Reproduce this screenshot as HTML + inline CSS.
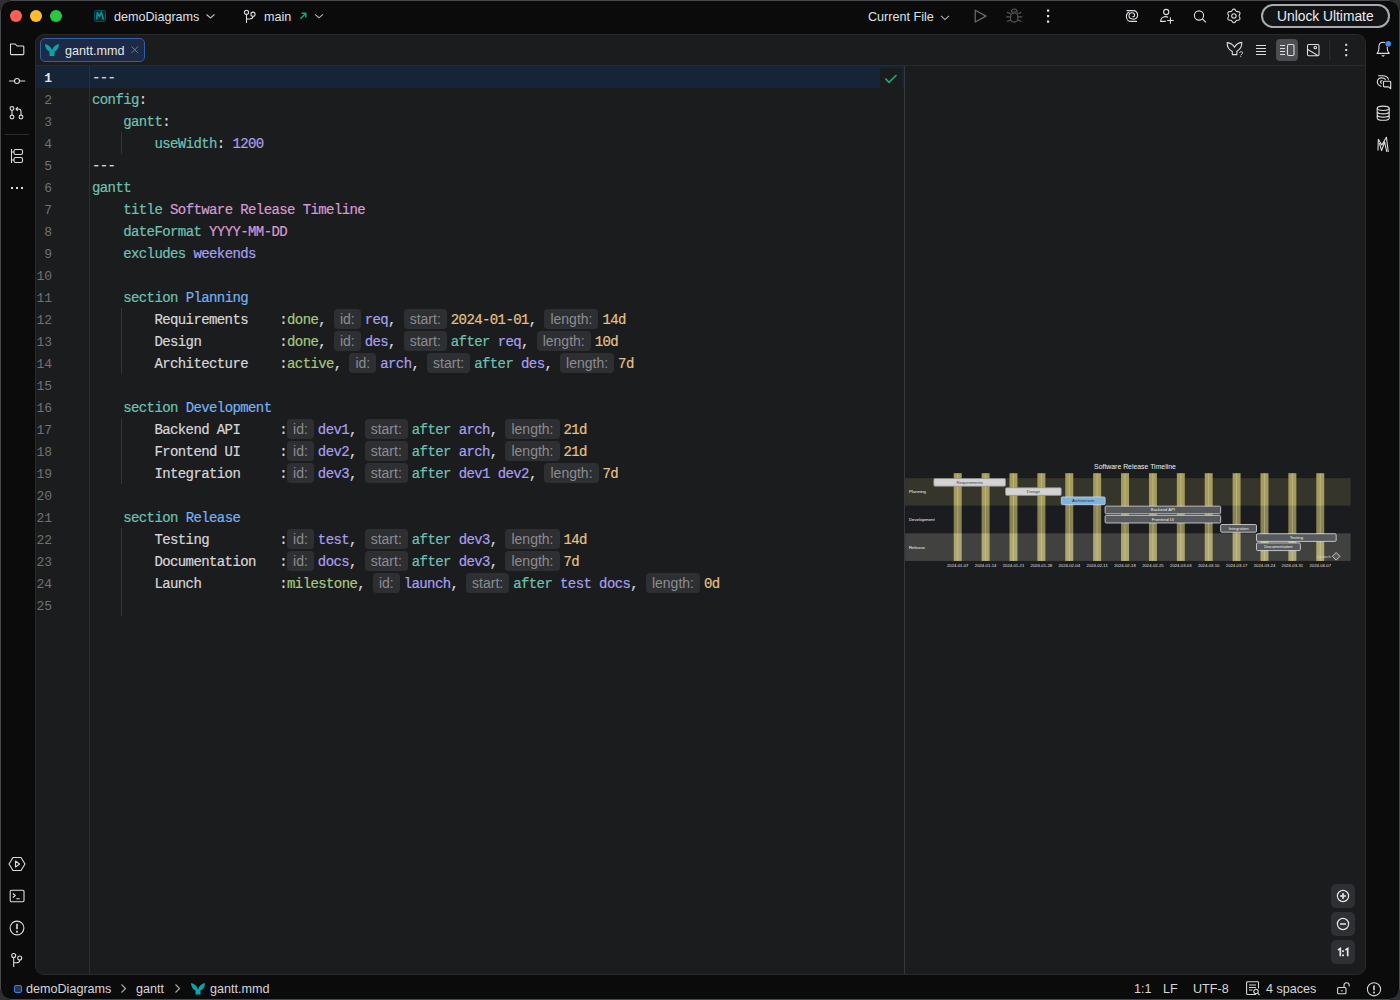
<!DOCTYPE html>
<html><head><meta charset="utf-8">
<style>
*{margin:0;padding:0;box-sizing:border-box}
html,body{width:1400px;height:1000px;overflow:hidden;background:#2e3034}
body{position:relative;font-family:"Liberation Sans",sans-serif;color:#dfe1e5}
.win{position:absolute;left:0;top:0;width:1400px;height:1000px;background:#0b0b0c;border-radius:11px;overflow:hidden}
.wb{position:absolute;left:0;top:0;width:1400px;height:1000px;border:1px solid #48494c;border-radius:11px;pointer-events:none}
.abs{position:absolute}
.tl{position:absolute;width:12px;height:12px;border-radius:50%;top:10px}
.ui{position:absolute;font-size:12.6px;line-height:16px;color:#dfe1e5;white-space:nowrap}
svg{position:absolute;overflow:visible}
.panel{position:absolute;left:35px;top:34px;width:1331px;height:941px;background:#1b1c1e;border:1px solid #28292b;border-radius:9px;overflow:hidden}
.code{position:absolute;left:92px;font-family:"Liberation Mono",monospace;font-size:14px;letter-spacing:-0.6px;-webkit-text-stroke:0.2px currentColor;line-height:22px;height:22px;padding-top:1px;white-space:pre;color:#d6d7da}
.ln{position:absolute;left:36px;width:16px;text-align:right;font-family:"Liberation Mono",monospace;font-size:13px;line-height:22px;height:22px;padding-top:2px;color:#6f7175;white-space:pre}
.ln.cur{color:#e3e4e7;font-weight:bold}
.k{color:#6fc1b3}.p{color:#a99ff0}.s{color:#d69ad6}.b{color:#76b1f2}.g{color:#a5c880}.y{color:#e6c187}.w{color:#d6d7da}
.h{display:inline-block;vertical-align:top;margin-top:0px;height:19.5px;line-height:21px;padding:0 6px;margin-right:4px;border-radius:4px;background:#2e2f32;color:#8b8c90;font-family:"Liberation Sans",sans-serif;font-size:14px;letter-spacing:0;-webkit-text-stroke:0}
.st{position:absolute;top:981px;font-size:12.6px;line-height:16px;color:#d5d6d9;white-space:nowrap}
</style></head><body>
<div class="win">
  <div class="tl" style="left:10px;background:#fe5f57"></div>
  <div class="tl" style="left:30px;background:#febc2e"></div>
  <div class="tl" style="left:50px;background:#28c840"></div>
  <div class="ui" style="left:114px;top:9px">demoDiagrams</div>
  <div class="ui" style="left:264px;top:9px">main</div>
  <div class="ui" style="left:868px;top:9px">Current File</div>
  <div class="abs" style="left:1261px;top:4px;width:129px;height:24px;border:2px solid #a9aaad;border-radius:12px;background:#131416"></div>
  <div class="ui" style="left:1277px;top:9px;font-size:13.8px;color:#eceef1">Unlock Ultimate</div>
  <!-- title bar icons -->
  <svg style="left:0;top:0" width="1400" height="34" viewBox="0 0 1400 34">
    <rect x="94.5" y="10.5" width="11" height="11" rx="1" fill="#052a2d" stroke="#0a4b50" stroke-width="1"/>
    <path d="M96.8 19.6 L97.3 12.6 L99.6 16.5 L101.3 12.2 L103.6 19.8" fill="none" stroke="#0b909a" stroke-width="1.6" stroke-linejoin="round"/>
    <path d="M206.5 14.5 L210.5 18 L214.5 14.5" fill="none" stroke="#b8b9bc" stroke-width="1.1"/>
    <circle cx="246.5" cy="12.3" r="2.1" fill="none" stroke="#dcdde0" stroke-width="1.1"/>
    <circle cx="253" cy="14.2" r="2.1" fill="none" stroke="#dcdde0" stroke-width="1.1"/>
    <path d="M246.5 14.4 V23 M253 16.3 C253 18.6 251.5 19 249.5 19 H246.5" fill="none" stroke="#dcdde0" stroke-width="1.1"/>
    <path d="M300.5 18.8 L305.6 13.5 M301.6 13.3 H305.8 V17.5" fill="none" stroke="#1fa36f" stroke-width="1.5"/>
    <path d="M315 14.3 L319 17.8 L323 14.3" fill="none" stroke="#b8b9bc" stroke-width="1.1"/>
    <path d="M941 15.8 L945 19.6 L949 15.8" fill="none" stroke="#b8b9bc" stroke-width="1.1"/>
    <path d="M975.2 10.2 L986 16.1 L975.2 22 Z" fill="none" stroke="#6c6d70" stroke-width="1.2" stroke-linejoin="round"/>
    <g fill="none" stroke="#545557" stroke-width="1.2" stroke-linecap="round">
      <path d="M1011.3 12 C1011.3 10.2 1012.5 9 1014.2 9 C1015.9 9 1017.1 10.2 1017.1 12 Z"/>
      <rect x="1010.6" y="13" width="7.2" height="9.2" rx="3.6"/>
      <path d="M1007.4 12.4 L1010.4 13.7 M1021 12.4 L1018 13.7 M1006.5 16.8 H1010.4 M1021.9 16.8 H1018 M1007.4 21.3 L1010.4 20.1 M1021 21.3 L1018 20.1"/>
    </g>
    <rect x="1047" y="9.5" width="2.2" height="2.2" fill="#dfe1e5"/>
    <rect x="1047" y="15" width="2.2" height="2.2" fill="#dfe1e5"/>
    <rect x="1047" y="20.5" width="2.2" height="2.2" fill="#dfe1e5"/>
    <g fill="none" stroke="#dcdde0" stroke-width="1.1">
      <g transform="translate(1120 6)"><path d="M6.6 4.6 H13 C16 4.6 17.6 7 17.6 9.6 C17.6 12.2 15 13.4 12.4 13 C10 12.6 8.8 11 9 9.5 C9.2 7.8 10.5 6.8 12 6.8 C13.6 6.8 14.6 8 14.6 9.2 C14.6 10.3 13.6 10.9 12.4 10.5"/><path d="M17 15.4 H10.5 C8 15.4 6.4 13 6.4 10.2 C6.4 8.2 7.6 6.7 9.4 6.1"/></g>
      <circle cx="1166.2" cy="12" r="2.6"/>
      <path d="M1165.8 21.4 H1160.6 C1160.6 18.6 1162.8 16.6 1165.5 16.6 C1166.5 16.6 1167.4 16.8 1168.1 17.2 M1170.4 17.3 V23.7 M1167.2 20.5 H1173.7"/>
      <circle cx="1199" cy="15.5" r="4.6"/>
      <path d="M1202.4 19 L1206 22.3"/>
      <path d="M1239.10 15.90 L1239.13 16.17 L1239.22 16.46 L1239.36 16.77 L1239.53 17.10 L1239.70 17.45 L1239.84 17.83 L1239.94 18.22 L1239.97 18.60 L1239.92 18.97 L1239.79 19.30 L1239.57 19.58 L1239.28 19.81 L1238.93 19.97 L1238.54 20.08 L1238.14 20.14 L1237.75 20.18 L1237.38 20.20 L1237.05 20.23 L1236.75 20.29 L1236.50 20.40 L1236.28 20.57 L1236.08 20.79 L1235.88 21.06 L1235.68 21.37 L1235.45 21.70 L1235.20 22.01 L1234.91 22.29 L1234.59 22.51 L1234.25 22.65 L1233.90 22.70 L1233.55 22.65 L1233.21 22.51 L1232.89 22.29 L1232.60 22.01 L1232.35 21.70 L1232.12 21.37 L1231.92 21.06 L1231.72 20.79 L1231.52 20.57 L1231.30 20.40 L1231.05 20.29 L1230.75 20.23 L1230.42 20.20 L1230.05 20.18 L1229.66 20.14 L1229.26 20.08 L1228.87 19.97 L1228.52 19.81 L1228.23 19.58 L1228.01 19.30 L1227.88 18.97 L1227.83 18.60 L1227.86 18.22 L1227.96 17.83 L1228.10 17.45 L1228.27 17.10 L1228.44 16.77 L1228.58 16.46 L1228.67 16.17 L1228.70 15.90 L1228.67 15.63 L1228.58 15.34 L1228.44 15.03 L1228.27 14.70 L1228.10 14.35 L1227.96 13.97 L1227.86 13.58 L1227.83 13.20 L1227.88 12.83 L1228.01 12.50 L1228.23 12.22 L1228.52 11.99 L1228.87 11.83 L1229.26 11.72 L1229.66 11.66 L1230.05 11.62 L1230.42 11.60 L1230.75 11.57 L1231.05 11.51 L1231.30 11.40 L1231.52 11.23 L1231.72 11.01 L1231.92 10.74 L1232.12 10.43 L1232.35 10.10 L1232.60 9.79 L1232.89 9.51 L1233.21 9.29 L1233.55 9.15 L1233.90 9.10 L1234.25 9.15 L1234.59 9.29 L1234.91 9.51 L1235.20 9.79 L1235.45 10.10 L1235.68 10.43 L1235.88 10.74 L1236.08 11.01 L1236.28 11.23 L1236.50 11.40 L1236.75 11.51 L1237.05 11.57 L1237.38 11.60 L1237.75 11.62 L1238.14 11.66 L1238.54 11.72 L1238.93 11.83 L1239.28 11.99 L1239.57 12.22 L1239.79 12.50 L1239.92 12.83 L1239.97 13.20 L1239.94 13.58 L1239.84 13.97 L1239.70 14.35 L1239.53 14.70 L1239.36 15.03 L1239.22 15.34 L1239.13 15.63 L1239.10 15.90 Z"/>
      <circle cx="1233.9" cy="15.9" r="2.2"/>
    </g>
  </svg>

  <!-- left toolbar -->
  <svg style="left:0;top:34px" width="34" height="940" viewBox="0 34 34 940">
    <g fill="none" stroke="#dcdde0" stroke-width="1.1" stroke-linejoin="round">
      <path d="M10.5 44 H15.2 L17 46 H23 C23.5 46 23.8 46.3 23.8 46.8 V53.8 C23.8 54.3 23.5 54.6 23 54.6 H11.3 C10.8 54.6 10.5 54.3 10.5 53.8 Z"/>
      <circle cx="17" cy="81" r="2.5"/>
      <path d="M9 81 H14.5 M19.5 81 H25.2"/>
      <circle cx="12" cy="108.5" r="1.9"/><circle cx="12" cy="117" r="1.9"/><circle cx="21" cy="117" r="1.9"/>
      <path d="M12 110.4 V115.1 M21 115.1 V111.5 C21 110 20 109 18.5 109 H16.3 M17.8 107.2 L16 109 L17.8 110.8"/>
      <path d="M11.5 149 V163 M11.5 152 H14 M11.5 160 H14"/>
      <rect x="14" y="149.5" width="8.5" height="5" rx="1.5"/><rect x="14" y="157.5" width="8.5" height="5" rx="1.5"/>
      <path d="M13 857.5 H21 L25 864 L21 870.5 H13 L9 864 Z"/>
      <path d="M15.5 861 L19.5 864 L15.5 867 Z"/>
      <rect x="10.2" y="890.3" width="13.8" height="11.5" rx="1.2"/>
      <path d="M12.8 893.5 L15.3 895.5 L12.8 897.5 M16.3 898.7 H19.8"/>
      <circle cx="17" cy="928" r="6.9"/>
      <circle cx="13.7" cy="955.5" r="2"/><circle cx="19.7" cy="958" r="2"/>
      <path d="M13.7 957.5 V967 M19.7 960 C19.7 962 18.5 962.8 16.5 962.8 H13.7"/>
    </g>
    <path d="M17 923.8 V929.3" stroke="#dcdde0" stroke-width="1.6"/>
    <rect x="16.1" y="930.8" width="1.8" height="1.8" fill="#dcdde0"/>
    <rect x="5" y="134" width="24" height="1" fill="#2b2c2f"/>
    <rect x="11" y="187" width="2" height="2" fill="#dcdde0"/><rect x="16" y="187" width="2" height="2" fill="#dcdde0"/><rect x="21" y="187" width="2" height="2" fill="#dcdde0"/>
  </svg>

  <!-- right toolbar -->
  <svg style="left:1366px;top:34px" width="34" height="140" viewBox="1366 34 34 140">
    <g fill="none" stroke="#dcdde0" stroke-width="1.1" stroke-linejoin="round">
      <path d="M1377.1 53.4 C1378.4 52 1378.9 50.5 1378.9 48.5 V47 C1378.9 44.2 1380.6 42.3 1383.1 42.3 C1385.6 42.3 1387.3 44.2 1387.3 47 V48.5 C1387.3 50.5 1387.8 52 1389.2 53.4 Z"/>
      
      <path d="M1378.2 75.8 H1382.5 C1385.5 75.8 1388 77.5 1388.6 79.6"/>
      <path d="M1381.4 86.6 C1379 85.5 1377.3 84 1377.3 82 C1377.3 79.5 1379.3 77.9 1381.6 77.9 C1383.2 77.9 1384.8 78.5 1385.7 79.6"/>
      <path d="M1381.6 83.7 C1380.9 83 1380.5 82.3 1380.5 81.7 C1380.5 81 1381.4 80.6 1382.4 80.6"/>
      <path d="M1384.3 81.3 H1389.9 C1390.4 81.3 1390.7 81.6 1390.7 82.1 V88.8 L1388.6 86.9 H1384.3 C1383.8 86.9 1383.5 86.6 1383.5 86.1 V82.1 C1383.5 81.6 1383.8 81.3 1384.3 81.3 Z"/>
      <ellipse cx="1383.2" cy="108.3" rx="6" ry="2.2"/>
      <path d="M1377.2 108.3 V118 C1377.2 119.3 1379.9 120.3 1383.2 120.3 C1386.5 120.3 1389.2 119.3 1389.2 118 V108.3 M1377.2 111.6 C1377.2 112.9 1379.9 113.9 1383.2 113.9 C1386.5 113.9 1389.2 112.9 1389.2 111.6 M1377.2 114.8 C1377.2 116.1 1379.9 117.1 1383.2 117.1 C1386.5 117.1 1389.2 116.1 1389.2 114.8"/>
      <path d="M1378 150.4 L1378.3 139.2 L1381.8 145 L1386.4 137.3 L1388.3 152 M1379.4 143 L1381.6 150.6 L1384.6 142 L1386.8 151.8"/>
    </g>
    <path d="M1381.2 55.3 H1385 L1383.1 56.9 Z" fill="#dcdde0"/>
    <circle cx="1388.2" cy="43.8" r="3.3" fill="#0b0b0c"/><circle cx="1388.2" cy="43.8" r="2.8" fill="#4a8af0"/>
  </svg>


  <div class="panel"></div>
  <div class="abs" style="left:40px;top:38px;width:105px;height:24px;background:#1c2a45;border:1px solid #2f5fa8;border-radius:5px"></div>
  <div class="ui" style="left:65px;top:43px;color:#e6e7ea">gantt.mmd</div>
  <svg style="left:0;top:0" width="1400" height="70" viewBox="0 0 1400 70">
    <path d="M45 44 C48.5 44.5 51 47 52 50.5 C53 47 55.5 44.5 59 44 C59 47.5 57 50.5 54.5 51.5 V56 H49.5 V51.5 C47 50.5 45 47.5 45 44 Z" fill="#0ba3ad"/>
    <path d="M131.5 46.5 L138 53 M138 46.5 L131.5 53" stroke="#818286" stroke-width="0.9"/>
    <g fill="none" stroke="#dcdde0" stroke-width="1.1" stroke-linejoin="round">
      <path d="M1227.2 42.6 C1230.5 42.8 1233 44.5 1234.5 47.3 C1236 44.5 1238.5 42.6 1241.8 42.4 C1242 46 1240 49.5 1236.9 51.2 V54.6 H1232.3 V51.4 C1229 49.8 1227 46.5 1227.2 42.6 Z"/>
      <path d="M1256 45.5 H1266 M1256 48.5 H1266 M1256 51.5 H1266 M1256 54.5 H1266" stroke-width="1.1"/>
    </g>
    <path d="M1239.4 52.6 C1239.8 51.5 1242.6 51.3 1242.7 52.8 C1242.8 54 1240.8 54.2 1240.8 55.4" fill="none" stroke="#dcdde0" stroke-width="0.9"/>
    <rect x="1240.3" y="56.1" width="1" height="1" fill="#dcdde0"/>
    <rect x="1276" y="39" width="22" height="22" rx="4" fill="#4d4e51"/>
    <g fill="none" stroke="#dcdde0" stroke-width="1.1" stroke-linejoin="round">
      <path d="M1280 45.5 H1285 M1280 48.5 H1285 M1280 51.5 H1285 M1280 54.5 H1285"/>
      <rect x="1287.5" y="44.5" width="6.5" height="11" rx="1.2"/>
      <rect x="1307.5" y="44.5" width="11.5" height="11.2" rx="1.2"/>
      <path d="M1307.8 49.6 L1317.8 55.4"/>
      <circle cx="1315.3" cy="47.5" r="1.3"/>
    </g>
    <rect x="1329.3" y="40" width="1" height="20" fill="#303134"/>
    <rect x="1345.2" y="43.8" width="2" height="2" fill="#dcdde0"/>
    <rect x="1345.2" y="49" width="2" height="2" fill="#dcdde0"/>
    <rect x="1345.2" y="54.2" width="2" height="2" fill="#dcdde0"/>
  </svg>
  <div class="abs" style="left:36px;top:65px;width:1329px;height:1px;background:#28292c"></div>
  <div class="abs" style="left:36px;top:66px;width:868px;height:22px;background:#162438"></div>
  <div class="abs" style="left:880px;top:68px;width:22px;height:22px;background:#1b1c1e;border-radius:4px"></div>
  <svg style="left:0;top:0" width="910" height="90"><path d="M885.8 79 L889 82.3 L896 75.5" fill="none" stroke="#1fa774" stroke-width="1.7" stroke-linecap="round" stroke-linejoin="round"/></svg>
  <div class="abs" style="left:89px;top:66px;width:1px;height:908px;background:#2e2f32"></div>
  <div class="abs" style="left:904px;top:66px;width:1px;height:908px;background:#36373a"></div>
  <div class="abs" style="left:121px;top:132px;width:1px;height:22px;background:#333437"></div>
  <div class="abs" style="left:121px;top:308px;width:1px;height:66px;background:#333437"></div>
  <div class="abs" style="left:121px;top:418px;width:1px;height:66px;background:#333437"></div>
  <div class="abs" style="left:121px;top:528px;width:1px;height:88px;background:#333437"></div>
  <div class="ln cur" style="top:66px">1</div>
  <div class="code" style="top:66px"><span class="w">---</span></div>
  <div class="ln" style="top:88px">2</div>
  <div class="code" style="top:88px"><span class="k">config</span>:</div>
  <div class="ln" style="top:110px">3</div>
  <div class="code" style="top:110px">    <span class="k">gantt</span>:</div>
  <div class="ln" style="top:132px">4</div>
  <div class="code" style="top:132px">        <span class="k">useWidth</span>: <span class="p">1200</span></div>
  <div class="ln" style="top:154px">5</div>
  <div class="code" style="top:154px"><span class="w">---</span></div>
  <div class="ln" style="top:176px">6</div>
  <div class="code" style="top:176px"><span class="k">gantt</span></div>
  <div class="ln" style="top:198px">7</div>
  <div class="code" style="top:198px">    <span class="k">title</span> <span class="s">Software Release Timeline</span></div>
  <div class="ln" style="top:220px">8</div>
  <div class="code" style="top:220px">    <span class="k">dateFormat</span> <span class="s">YYYY-MM-DD</span></div>
  <div class="ln" style="top:242px">9</div>
  <div class="code" style="top:242px">    <span class="k">excludes</span> <span class="p">weekends</span></div>
  <div class="ln" style="top:264px">10</div>
  <div class="code" style="top:264px"></div>
  <div class="ln" style="top:286px">11</div>
  <div class="code" style="top:286px">    <span class="k">section</span> <span class="b">Planning</span></div>
  <div class="ln" style="top:308px">12</div>
  <div class="code" style="top:308px">        Requirements    :<span class="g">done</span>, <span class="h">id:</span><span class="p">req</span>, <span class="h">start:</span><span class="y">2024-01-01</span>, <span class="h">length:</span><span class="y">14d</span></div>
  <div class="ln" style="top:330px">13</div>
  <div class="code" style="top:330px">        Design          :<span class="g">done</span>, <span class="h">id:</span><span class="p">des</span>, <span class="h">start:</span><span class="k">after</span> <span class="p">req</span>, <span class="h">length:</span><span class="y">10d</span></div>
  <div class="ln" style="top:352px">14</div>
  <div class="code" style="top:352px">        Architecture    :<span class="g">active</span>, <span class="h">id:</span><span class="p">arch</span>, <span class="h">start:</span><span class="k">after</span> <span class="p">des</span>, <span class="h">length:</span><span class="y">7d</span></div>
  <div class="ln" style="top:374px">15</div>
  <div class="code" style="top:374px"></div>
  <div class="ln" style="top:396px">16</div>
  <div class="code" style="top:396px">    <span class="k">section</span> <span class="b">Development</span></div>
  <div class="ln" style="top:418px">17</div>
  <div class="code" style="top:418px">        Backend API     :<span class="h">id:</span><span class="p">dev1</span>, <span class="h">start:</span><span class="k">after</span> <span class="p">arch</span>, <span class="h">length:</span><span class="y">21d</span></div>
  <div class="ln" style="top:440px">18</div>
  <div class="code" style="top:440px">        Frontend UI     :<span class="h">id:</span><span class="p">dev2</span>, <span class="h">start:</span><span class="k">after</span> <span class="p">arch</span>, <span class="h">length:</span><span class="y">21d</span></div>
  <div class="ln" style="top:462px">19</div>
  <div class="code" style="top:462px">        Integration     :<span class="h">id:</span><span class="p">dev3</span>, <span class="h">start:</span><span class="k">after</span> <span class="p">dev1</span> <span class="p">dev2</span>, <span class="h">length:</span><span class="y">7d</span></div>
  <div class="ln" style="top:484px">20</div>
  <div class="code" style="top:484px"></div>
  <div class="ln" style="top:506px">21</div>
  <div class="code" style="top:506px">    <span class="k">section</span> <span class="b">Release</span></div>
  <div class="ln" style="top:528px">22</div>
  <div class="code" style="top:528px">        Testing         :<span class="h">id:</span><span class="p">test</span>, <span class="h">start:</span><span class="k">after</span> <span class="p">dev3</span>, <span class="h">length:</span><span class="y">14d</span></div>
  <div class="ln" style="top:550px">23</div>
  <div class="code" style="top:550px">        Documentation   :<span class="h">id:</span><span class="p">docs</span>, <span class="h">start:</span><span class="k">after</span> <span class="p">dev3</span>, <span class="h">length:</span><span class="y">7d</span></div>
  <div class="ln" style="top:572px">24</div>
  <div class="code" style="top:572px">        Launch          :<span class="g">milestone</span>, <span class="h">id:</span><span class="p">launch</span>, <span class="h">start:</span><span class="k">after</span> <span class="p">test</span> <span class="p">docs</span>, <span class="h">length:</span><span class="y">0d</span></div>
  <div class="ln" style="top:594px">25</div>
  <div class="code" style="top:594px"></div>
  <svg style="left:905px;top:458.7px" width="460" height="121.1" viewBox="0 0 1200 316" font-family="Liberation Sans, sans-serif">
    <rect x="126.98" y="37" width="20.79" height="229" fill="#a59d5d"/>
    <rect x="199.75" y="37" width="20.79" height="229" fill="#a59d5d"/>
    <rect x="272.52" y="37" width="20.79" height="229" fill="#a59d5d"/>
    <rect x="345.30" y="37" width="20.79" height="229" fill="#a59d5d"/>
    <rect x="418.07" y="37" width="20.79" height="229" fill="#a59d5d"/>
    <rect x="490.84" y="37" width="20.79" height="229" fill="#a59d5d"/>
    <rect x="563.61" y="37" width="20.79" height="229" fill="#a59d5d"/>
    <rect x="636.39" y="37" width="20.79" height="229" fill="#a59d5d"/>
    <rect x="709.16" y="37" width="20.79" height="229" fill="#a59d5d"/>
    <rect x="781.93" y="37" width="20.79" height="229" fill="#a59d5d"/>
    <rect x="854.70" y="37" width="20.79" height="229" fill="#a59d5d"/>
    <rect x="927.48" y="37" width="20.79" height="229" fill="#a59d5d"/>
    <rect x="1000.25" y="37" width="20.79" height="229" fill="#a59d5d"/>
    <rect x="1073.02" y="37" width="20.79" height="229" fill="#a59d5d"/>
    <rect x="0" y="50" width="1162.5" height="72" fill="#a79960" fill-opacity="0.2"/>
    <rect x="0" y="122" width="1162.5" height="72" fill="#1e2026" fill-opacity="0.2"/>
    <rect x="0" y="194" width="1162.5" height="72" fill="#dcd6c6" fill-opacity="0.2"/>
    <line x1="137.38" y1="37" x2="137.38" y2="266" stroke="#e0ddb8" stroke-opacity="0.5" stroke-width="2"/>
    <text x="137.38" y="282" font-size="11" fill="#e0e0e0" text-anchor="middle">2024-01-07</text>
    <line x1="210.15" y1="37" x2="210.15" y2="266" stroke="#e0ddb8" stroke-opacity="0.5" stroke-width="2"/>
    <text x="210.15" y="282" font-size="11" fill="#e0e0e0" text-anchor="middle">2024-01-14</text>
    <line x1="282.92" y1="37" x2="282.92" y2="266" stroke="#e0ddb8" stroke-opacity="0.5" stroke-width="2"/>
    <text x="282.92" y="282" font-size="11" fill="#e0e0e0" text-anchor="middle">2024-01-21</text>
    <line x1="355.69" y1="37" x2="355.69" y2="266" stroke="#e0ddb8" stroke-opacity="0.5" stroke-width="2"/>
    <text x="355.69" y="282" font-size="11" fill="#e0e0e0" text-anchor="middle">2024-01-28</text>
    <line x1="428.47" y1="37" x2="428.47" y2="266" stroke="#e0ddb8" stroke-opacity="0.5" stroke-width="2"/>
    <text x="428.47" y="282" font-size="11" fill="#e0e0e0" text-anchor="middle">2024-02-04</text>
    <line x1="501.24" y1="37" x2="501.24" y2="266" stroke="#e0ddb8" stroke-opacity="0.5" stroke-width="2"/>
    <text x="501.24" y="282" font-size="11" fill="#e0e0e0" text-anchor="middle">2024-02-11</text>
    <line x1="574.01" y1="37" x2="574.01" y2="266" stroke="#e0ddb8" stroke-opacity="0.5" stroke-width="2"/>
    <text x="574.01" y="282" font-size="11" fill="#e0e0e0" text-anchor="middle">2024-02-18</text>
    <line x1="646.78" y1="37" x2="646.78" y2="266" stroke="#e0ddb8" stroke-opacity="0.5" stroke-width="2"/>
    <text x="646.78" y="282" font-size="11" fill="#e0e0e0" text-anchor="middle">2024-02-25</text>
    <line x1="719.55" y1="37" x2="719.55" y2="266" stroke="#e0ddb8" stroke-opacity="0.5" stroke-width="2"/>
    <text x="719.55" y="282" font-size="11" fill="#e0e0e0" text-anchor="middle">2024-03-03</text>
    <line x1="792.33" y1="37" x2="792.33" y2="266" stroke="#e0ddb8" stroke-opacity="0.5" stroke-width="2"/>
    <text x="792.33" y="282" font-size="11" fill="#e0e0e0" text-anchor="middle">2024-03-10</text>
    <line x1="865.10" y1="37" x2="865.10" y2="266" stroke="#e0ddb8" stroke-opacity="0.5" stroke-width="2"/>
    <text x="865.10" y="282" font-size="11" fill="#e0e0e0" text-anchor="middle">2024-03-17</text>
    <line x1="937.87" y1="37" x2="937.87" y2="266" stroke="#e0ddb8" stroke-opacity="0.5" stroke-width="2"/>
    <text x="937.87" y="282" font-size="11" fill="#e0e0e0" text-anchor="middle">2024-03-24</text>
    <line x1="1010.64" y1="37" x2="1010.64" y2="266" stroke="#e0ddb8" stroke-opacity="0.5" stroke-width="2"/>
    <text x="1010.64" y="282" font-size="11" fill="#e0e0e0" text-anchor="middle">2024-03-31</text>
    <line x1="1083.42" y1="37" x2="1083.42" y2="266" stroke="#e0ddb8" stroke-opacity="0.5" stroke-width="2"/>
    <text x="1083.42" y="282" font-size="11" fill="#e0e0e0" text-anchor="middle">2024-04-07</text>
    <rect x="75.00" y="51" width="187.13" height="20" rx="3" fill="#d3d3d3" stroke="#8f8f8f" stroke-width="2"/>
    <text x="168.56" y="65" font-size="11" fill="#3a3a3a" text-anchor="middle">Requirements</text>
    <rect x="262.13" y="75" width="145.54" height="20" rx="3" fill="#d3d3d3" stroke="#8f8f8f" stroke-width="2"/>
    <text x="334.90" y="89" font-size="11" fill="#3a3a3a" text-anchor="middle">Design</text>
    <rect x="407.67" y="99" width="114.36" height="20" rx="3" fill="#80b4e0" stroke="#c8d8ee" stroke-width="2"/>
    <text x="464.85" y="113" font-size="11" fill="#1f2a3a" text-anchor="middle">Architecture</text>
    <rect x="522.03" y="123" width="301.49" height="20" rx="3" fill="#575a5c" stroke="#e6e6e6" stroke-width="2"/>
    <text x="672.77" y="137" font-size="11" fill="#eeeeee" text-anchor="middle">Backend API</text>
    <rect x="522.03" y="147" width="301.49" height="20" rx="3" fill="#575a5c" stroke="#e6e6e6" stroke-width="2"/>
    <text x="672.77" y="161" font-size="11" fill="#eeeeee" text-anchor="middle">Frontend UI</text>
    <rect x="823.51" y="171" width="93.56" height="20" rx="3" fill="#575a5c" stroke="#e6e6e6" stroke-width="2"/>
    <text x="870.30" y="185" font-size="11" fill="#eeeeee" text-anchor="middle">Integration</text>
    <rect x="917.08" y="195" width="207.92" height="20" rx="3" fill="#575a5c" stroke="#e6e6e6" stroke-width="2"/>
    <text x="1021.04" y="209" font-size="11" fill="#eeeeee" text-anchor="middle">Testing</text>
    <rect x="917.08" y="219" width="114.36" height="20" rx="3" fill="#575a5c" stroke="#e6e6e6" stroke-width="2"/>
    <text x="974.26" y="233" font-size="11" fill="#eeeeee" text-anchor="middle">Documentation</text>
    <rect x="1118.00" y="247" width="14" height="14" fill="#54575a" stroke="#e6e6e6" stroke-width="2" transform="rotate(45 1125.00 254)"/>
    <text x="1111.00" y="258" font-size="11" fill="#d8d8d8" text-anchor="end">Launch</text>
    <text x="10" y="90" font-size="11.5" fill="#f4f4f4">Planning</text>
    <text x="10" y="162" font-size="11.5" fill="#f4f4f4">Development</text>
    <text x="10" y="234" font-size="11.5" fill="#f4f4f4">Release</text>
    <text x="600" y="25" font-size="18" fill="#f0f0f0" text-anchor="middle">Software Release Timeline</text>
  </svg>
  <div class="abs" style="left:1331px;top:884px;width:24px;height:24px;background:#2f3033;border-radius:5px"></div>
  <div class="abs" style="left:1331px;top:912px;width:24px;height:24px;background:#2f3033;border-radius:5px"></div>
  <div class="abs" style="left:1331px;top:940px;width:24px;height:24px;background:#2f3033;border-radius:5px"></div>
  <svg style="left:0;top:0" width="1400" height="1000">
    <g fill="none" stroke="#e6e7ea" stroke-width="1.2">
      <circle cx="1343" cy="896" r="5.6"/><path d="M1343 893 V899 M1340 896 H1346" stroke-width="1.6"/>
      <circle cx="1343" cy="924" r="5.6"/><path d="M1340 924 H1346" stroke-width="1.6"/>
    </g>
  </svg>
  <svg style="left:0;top:0" width="1400" height="1000"><g fill="none" stroke="#e6e7ea" stroke-width="1.7"><path d="M1338 950 L1340.3 948.5 V956.2 M1345.4 950 L1347.7 948.5 V956.2"/></g><rect x="1342.1" y="950.3" width="1.8" height="1.8" fill="#e6e7ea"/><rect x="1342.1" y="954.4" width="1.8" height="1.8" fill="#e6e7ea"/></svg>
  <div class="abs" style="left:14px;top:985px;width:8px;height:8px;border:1.3px solid #3b82e8;background:#283656;border-radius:2px"></div>
  <div class="st" style="left:26px">demoDiagrams</div>
  <div class="st" style="left:136px">gantt</div>
  <div class="st" style="left:210px">gantt.mmd</div>
  <div class="st" style="left:1134px">1:1</div>
  <div class="st" style="left:1163px">LF</div>
  <div class="st" style="left:1193px">UTF-8</div>
  <div class="st" style="left:1266px">4 spaces</div>
  <svg style="left:0;top:970px" width="1400" height="30" viewBox="0 970 1400 30">
    <g fill="none" stroke="#a8a9ac" stroke-width="1.1">
      <path d="M121.5 984.5 L125.5 988.5 L121.5 992.5 M175.5 984.5 L179.5 988.5 L175.5 992.5"/>
    </g>
    <path d="M191 983 C194.5 983.5 197 986 198 989.5 C199 986 201.5 983.5 205 983 C205 986.5 203 989.5 200.5 990.5 V994.5 H195.5 V990.5 C193 989.5 191 986.5 191 983 Z" fill="#0ba3ad"/>
    <g fill="none" stroke="#d5d6d9" stroke-width="1.1" stroke-linejoin="round">
      <path d="M1256 994.5 H1247.5 C1247 994.5 1246.6 994.1 1246.6 993.6 V982.6 C1246.6 982.1 1247 981.7 1247.5 981.7 H1257.6 C1258.1 981.7 1258.5 982.1 1258.5 982.6 V988.5"/>
      <path d="M1249 985 H1256 M1249 987.5 H1256 M1249 990 H1252.5"/>
      <circle cx="1256" cy="991.5" r="2.2"/><path d="M1257.6 993.1 L1259.6 995.1"/>
      <rect x="1337.6" y="987.5" width="8.4" height="6.3" rx="1"/>
      <path d="M1344 987.5 V985.3 C1344 983.8 1345.1 982.8 1346.6 982.8 C1348.1 982.8 1349.2 983.8 1349.2 985.3 V986.5"/>
      <circle cx="1374" cy="989.3" r="6.6"/>
    </g>
    <rect x="1340.8" y="990" width="2" height="1.5" fill="#888"/>
    <path d="M1374 985.6 V990.2" stroke="#d5d6d9" stroke-width="1.6"/>
    <rect x="1373.1" y="991.6" width="1.8" height="1.8" fill="#d5d6d9"/>
  </svg>
  <div class="wb"></div>
</div>
</body></html>
